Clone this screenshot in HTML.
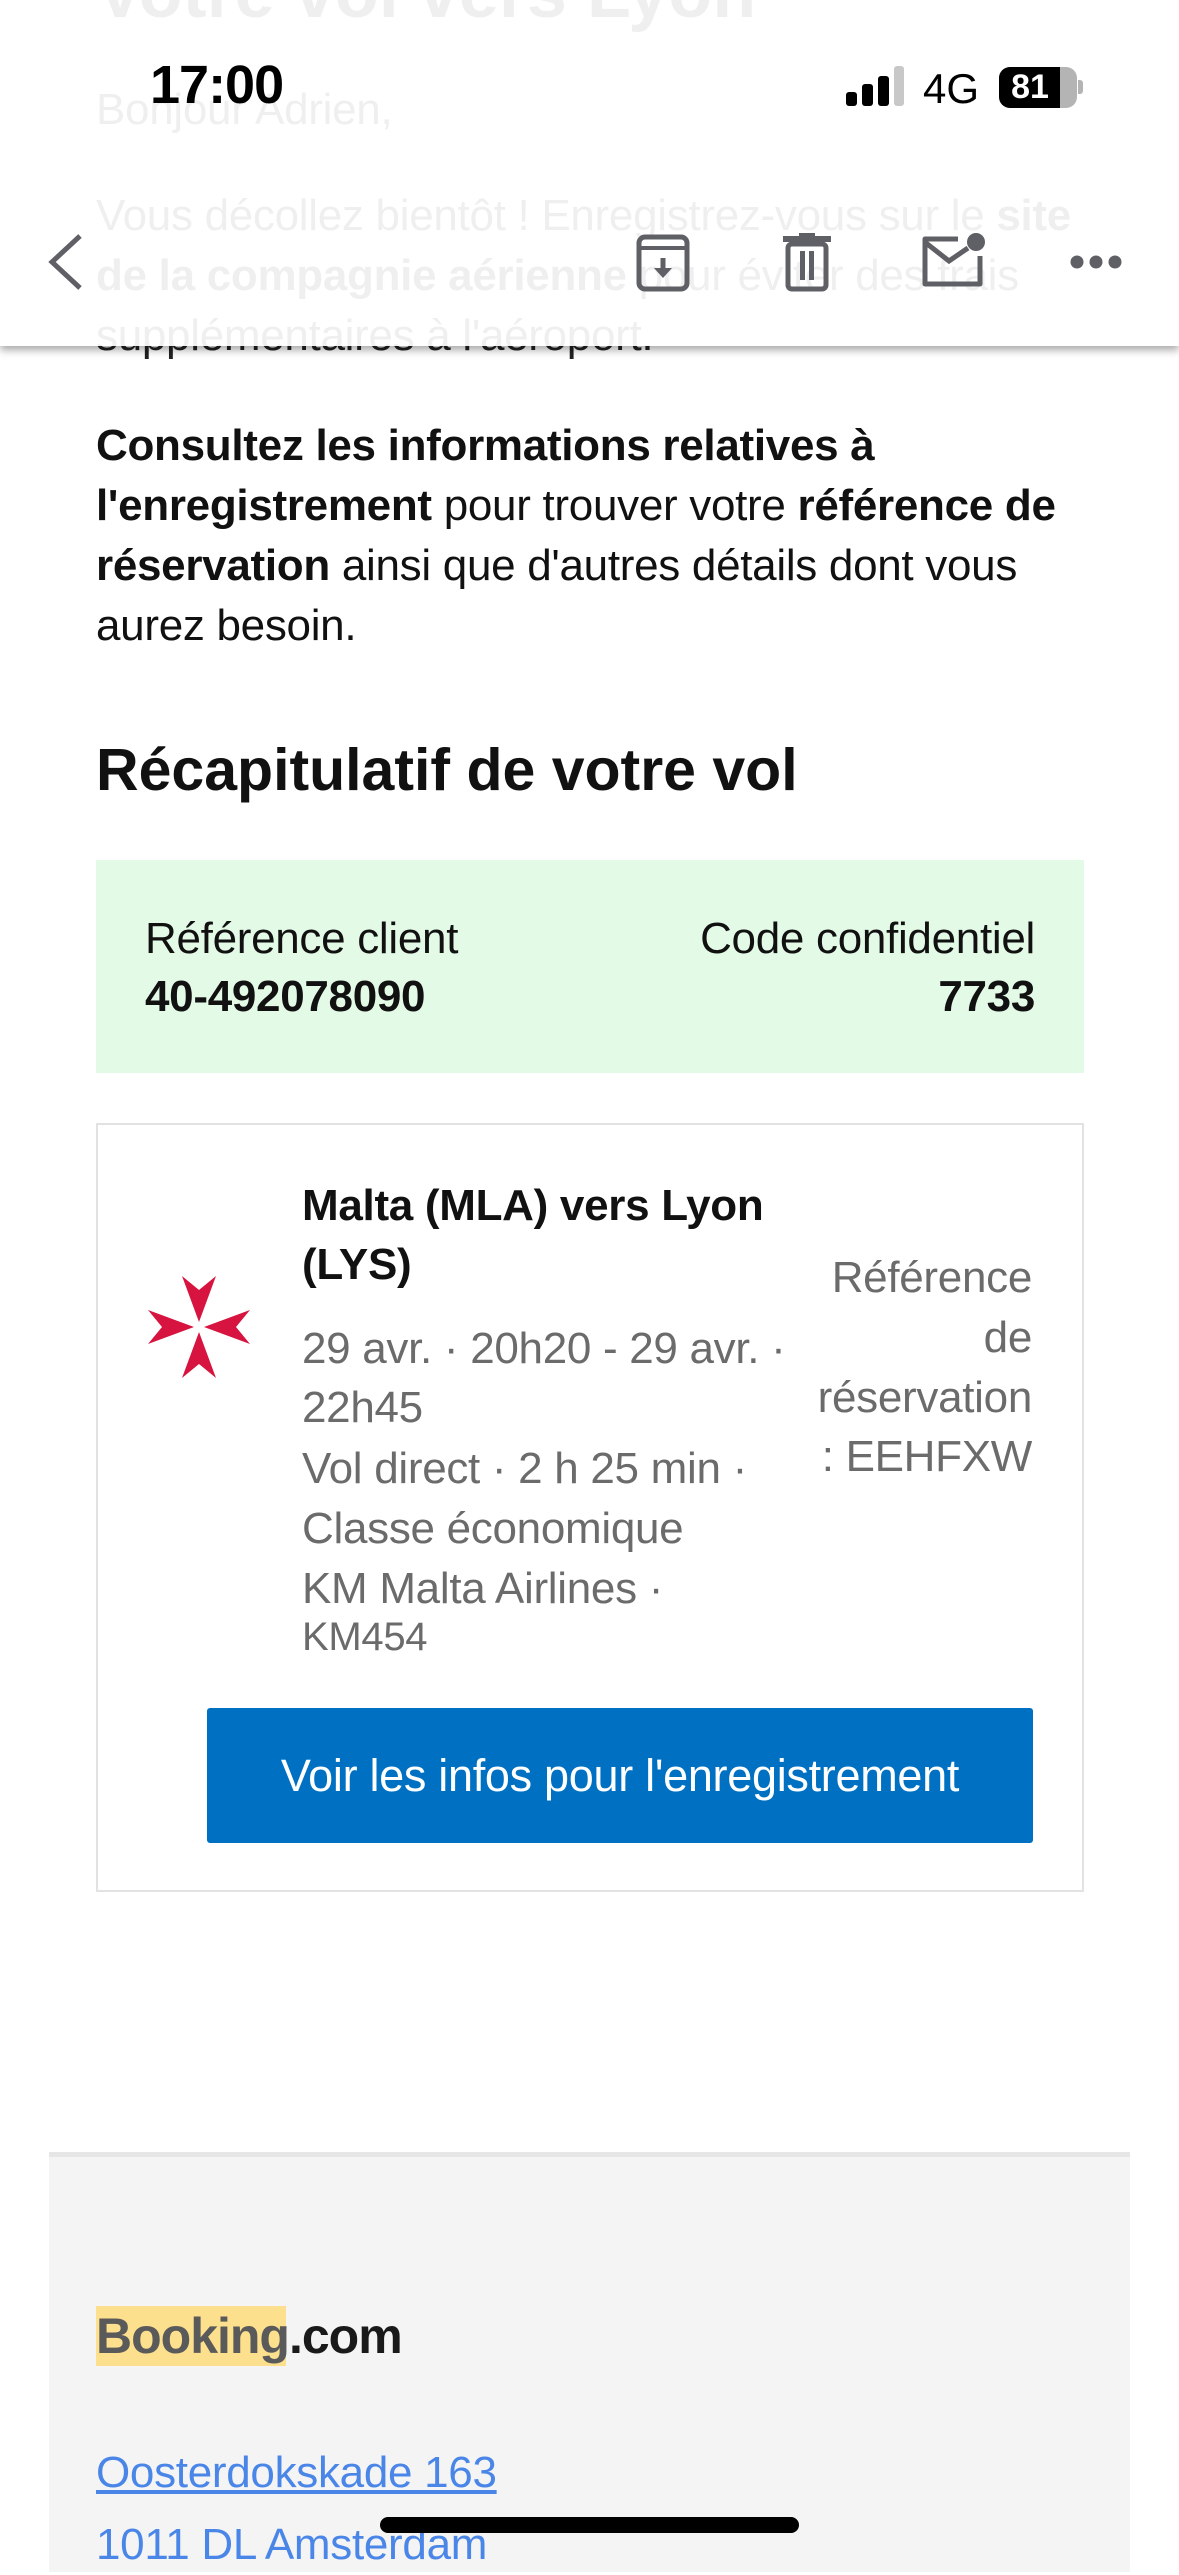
<!DOCTYPE html>
<html><head><meta charset="utf-8">
<style>
*{margin:0;padding:0;box-sizing:border-box}
body{width:1179px;height:2556px;overflow:hidden;background:#fff;position:relative;font-family:"Liberation Sans",Arial,sans-serif;color:#111}
.a{position:absolute;white-space:nowrap}
.t{font-size:44px;line-height:60px;letter-spacing:-0.3px}
b{font-weight:700}
.g{color:#6b6b6b}
</style></head><body>

<div class="a t" style="left:96px;top:80px;color:#222">Bonjour Adrien,</div>
<div class="a t" style="left:96px;top:186px;color:#222">Vous décollez bientôt ! Enregistrez-vous sur le <b>site</b></div>
<div class="a t" style="left:96px;top:246px;color:#222"><b>de la compagnie aérienne</b> pour éviter des frais</div>
<div class="a t" style="left:96px;top:306px;color:#222">supplémentaires à l'aéroport.</div>
<div class="a" style="left:96px;top:-48px;font-size:72px;font-weight:700;color:#222">Votre vol vers Lyon</div>

<div class="a" style="left:0;top:0;width:1179px;height:346px;background:rgba(255,255,255,0.93);box-shadow:0 4px 8px rgba(0,0,0,0.35)"></div>

<div class="a" style="left:150px;top:54px;font-size:54px;font-weight:700;letter-spacing:-1px;color:#000">17:00</div>
<div class="a" style="left:846px;top:92px;width:11px;height:14px;background:#000;border-radius:3px"></div>
<div class="a" style="left:862px;top:84px;width:11px;height:22px;background:#000;border-radius:3px"></div>
<div class="a" style="left:878px;top:76px;width:11px;height:30px;background:#000;border-radius:3px"></div>
<div class="a" style="left:894px;top:66px;width:10px;height:40px;background:#c8c8c8;border-radius:3px"></div>
<div class="a" style="left:923px;top:65px;font-size:42px;font-weight:400;color:#000">4G</div>
<div class="a" style="left:999px;top:67px;width:78px;height:41px;background:#b4b4b4;border-radius:11px;overflow:hidden"><div style="width:61px;height:41px;background:#000"></div></div>
<div class="a" style="left:999px;top:67px;width:62px;height:41px;color:#fff;font-size:34px;font-weight:700;text-align:center;line-height:41px">81</div>
<div class="a" style="left:1078px;top:80px;width:5px;height:14px;background:#b4b4b4;border-radius:0 3px 3px 0"></div>

<svg class="a" style="left:40px;top:228px" width="50" height="68" viewBox="0 0 50 68"><path d="M40 8 L12 34 L40 60" fill="none" stroke="#5f6066" stroke-width="5"/></svg>
<svg class="a" style="left:630px;top:230px" width="66" height="66" viewBox="0 0 66 66"><rect x="9" y="7" width="48" height="52" rx="6" fill="none" stroke="#5f6066" stroke-width="5"/><line x1="9" y1="18" x2="57" y2="18" stroke="#5f6066" stroke-width="4"/><path d="M33 28 V42" stroke="#5f6066" stroke-width="5"/><path d="M24 38 L33 48 L42 38Z" fill="#5f6066"/></svg>
<svg class="a" style="left:778px;top:230px" width="60" height="66" viewBox="0 0 60 66"><rect x="5" y="6" width="48" height="6" fill="#5f6066"/><rect x="21" y="3" width="16" height="5" fill="#5f6066"/><rect x="10" y="14" width="38" height="45" rx="4" fill="none" stroke="#5f6066" stroke-width="5"/><rect x="22" y="21" width="5" height="29" fill="#5f6066"/><rect x="31" y="21" width="5" height="29" fill="#5f6066"/></svg>
<svg class="a" style="left:916px;top:226px" width="72" height="66" viewBox="0 0 72 66"><path d="M42 13 H9 V58 H64 V30" fill="none" stroke="#5f6066" stroke-width="5" stroke-linejoin="round"/><path d="M10 17 L33 35 L52 22" fill="none" stroke="#5f6066" stroke-width="5"/><circle cx="60" cy="16" r="9" fill="#5f6066"/></svg>
<svg class="a" style="left:1068px;top:250px" width="56" height="24" viewBox="0 0 56 24"><circle cx="9" cy="12" r="6.5" fill="#5f6066"/><circle cx="28" cy="12" r="6.5" fill="#5f6066"/><circle cx="47" cy="12" r="6.5" fill="#5f6066"/></svg>

<div class="a t" style="left:96px;top:416px"><b>Consultez les informations relatives à</b></div>
<div class="a t" style="left:96px;top:476px"><b>l'enregistrement</b> pour trouver votre <b>référence de</b></div>
<div class="a t" style="left:96px;top:536px"><b>réservation</b> ainsi que d'autres détails dont vous</div>
<div class="a t" style="left:96px;top:596px">aurez besoin.</div>

<div class="a" style="left:96px;top:736px;font-size:59px;font-weight:700">Récapitulatif de votre vol</div>

<div class="a" style="left:96px;top:860px;width:988px;height:213px;background:#e3fae6"></div>
<div class="a t" style="left:145px;top:909px">Référence client</div>
<div class="a t" style="left:145px;top:967px;font-weight:700">40-492078090</div>
<div class="a t" style="right:144px;top:909px">Code confidentiel</div>
<div class="a t" style="right:144px;top:967px;font-weight:700">7733</div>

<div class="a" style="left:96px;top:1123px;width:988px;height:769px;border:2px solid #e2e2e2"></div>
<svg class="a" style="left:146px;top:1274px" width="106" height="106" viewBox="-53 -53 106 106" fill="#d7143f">
<g id="arm"><path d="M0 -5 L-17 -51 L0 -37 L17 -51Z"/></g>
<use href="#arm" transform="rotate(90)"/><use href="#arm" transform="rotate(180)"/><use href="#arm" transform="rotate(270)"/>
</svg>
<div class="a t" style="left:302px;top:1176px;font-weight:700">Malta (MLA) vers Lyon</div>
<div class="a t" style="left:302px;top:1235px;font-weight:700">(LYS)</div>
<div class="a t g" style="left:302px;top:1319px">29 avr. · 20h20 - 29 avr. ·</div>
<div class="a t g" style="left:302px;top:1378px">22h45</div>
<div class="a t g" style="left:302px;top:1439px">Vol direct · 2 h 25 min ·</div>
<div class="a t g" style="left:302px;top:1499px">Classe économique</div>
<div class="a t g" style="left:302px;top:1559px">KM Malta Airlines ·</div>
<div class="a g" style="left:302px;top:1617px;font-size:40px;line-height:40px;letter-spacing:-0.3px">KM454</div>
<div class="a t g" style="right:147px;top:1248px">Référence</div>
<div class="a t g" style="right:147px;top:1308px">de</div>
<div class="a t g" style="right:147px;top:1368px">réservation</div>
<div class="a t g" style="right:147px;top:1427px">: EEHFXW</div>

<div class="a" style="left:207px;top:1708px;width:826px;height:135px;background:#0071c2;border-radius:3px;color:#fff;font-size:45px;line-height:135px;text-align:center;letter-spacing:-0.3px">Voir les infos pour l'enregistrement</div>

<div class="a" style="left:49px;top:2152px;width:1081px;height:420px;background:#f4f4f4;border-top:5px solid #e6e6e6"></div>
<div class="a" style="left:96px;top:2306px;width:190px;height:60px;background:#fde08d"></div>
<div class="a" style="left:96px;top:2308px;font-size:50px;font-weight:700;letter-spacing:-1px;line-height:56px"><span style="color:#5a5a5a">Booking</span><span style="color:#1a1a1a">.com</span></div>
<div class="a t" style="left:96px;top:2443px;color:#4a86e8;text-decoration:underline">Oosterdokskade 163</div>
<div class="a t" style="left:96px;top:2515px;color:#4a86e8">1011 DL Amsterdam</div>
<div class="a" style="left:380px;top:2517px;width:419px;height:16px;background:#000;border-radius:8px"></div>
</body></html>
